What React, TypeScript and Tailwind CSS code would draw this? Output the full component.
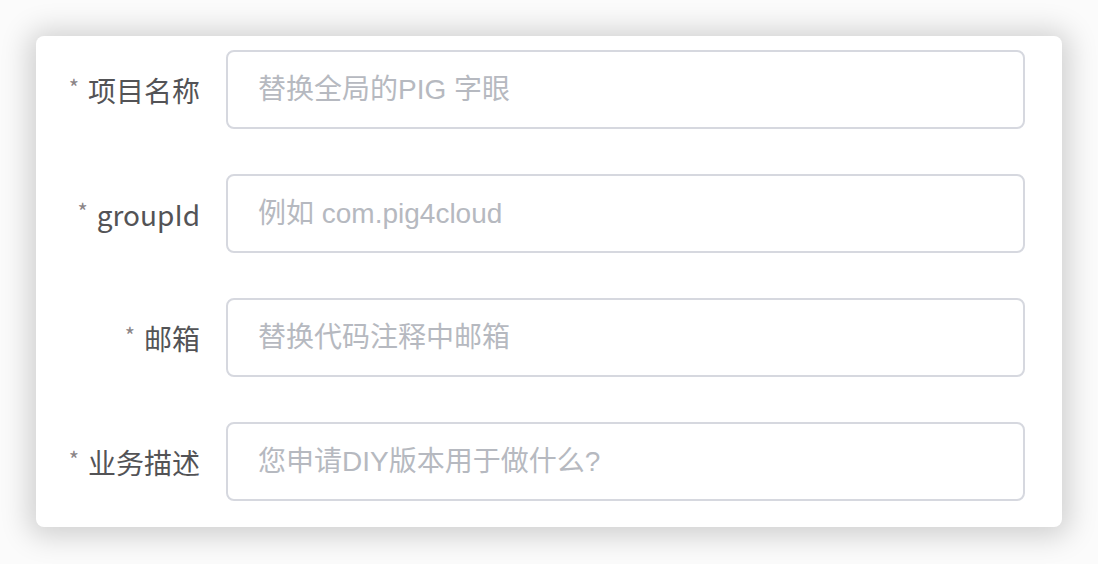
import React from 'react';

const fields = [
  { label: '项目名称', placeholder: '替换全局的PIG 字眼' },
  { label: 'groupId', placeholder: '例如 com.pig4cloud' },
  { label: '邮箱', placeholder: '替换代码注释中邮箱' },
  { label: '业务描述', placeholder: '您申请DIY版本用于做什么?' },
];

const labelFont = { fontFamily: '"Noto Sans CJK SC", "Noto Sans", sans-serif' };
const inputFont = { fontFamily: '"Liberation Sans", "Noto Sans CJK SC", sans-serif' };

export default function App() {
  return (
    <div className="w-[1098px] h-[564px] bg-[#fbfbfb] pt-[36px] pl-[36px]">
      <div className="w-[1026px] h-[491px] bg-white rounded-[8px] shadow-[0_2px_28px_8px_rgba(0,0,0,0.17)] pt-[14px] pr-[37px] flex flex-col gap-[45px]">
        {fields.map((f) => (
          <div key={f.label} className="flex items-center">
            <label
              className="w-[164px] shrink-0 flex justify-end items-center text-[28px] leading-none text-[#535356]"
              style={labelFont}
            >
              <span className="text-[#8b8587] text-[22px] mt-[-8px] mr-[9px]">*</span>
              <span>{f.label}</span>
            </label>
            <input
              className="ml-[26px] flex-1 h-[79px] rounded-[8px] border-2 border-[#d6d8df] bg-white px-[30px] text-[28px] text-[#606266] placeholder:text-[#b6b9c0] outline-none"
              style={inputFont}
              placeholder={f.placeholder}
            />
          </div>
        ))}
      </div>
    </div>
  );
}
